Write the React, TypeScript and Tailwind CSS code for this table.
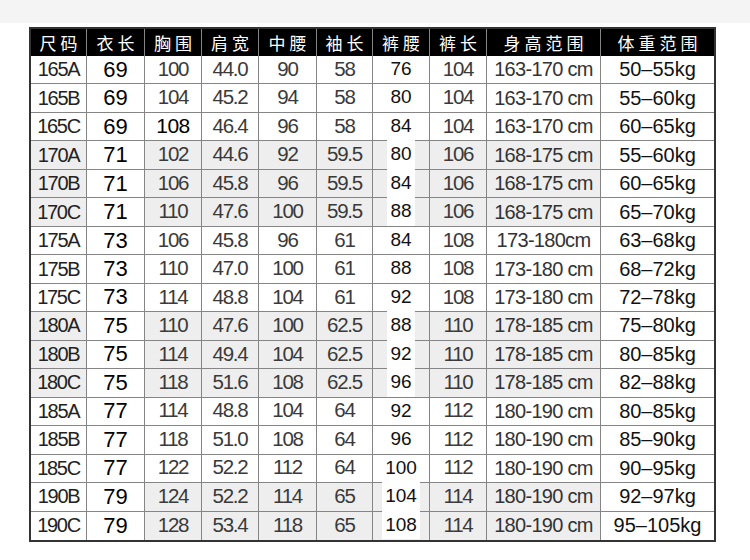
import React from "react";

const headers = ["尺码", "衣长", "胸围", "肩宽", "中腰", "袖长", "裤腰", "裤长", "身高范围", "体重范围"];

const rows: string[][] = [
  ["165A", "69", "100", "44.0", "90", "58", "76", "104", "163-170 cm", "50–55kg"],
  ["165B", "69", "104", "45.2", "94", "58", "80", "104", "163-170 cm", "55–60kg"],
  ["165C", "69", "108", "46.4", "96", "58", "84", "104", "163-170 cm", "60–65kg"],
  ["170A", "71", "102", "44.6", "92", "59.5", "80", "106", "168-175 cm", "55–60kg"],
  ["170B", "71", "106", "45.8", "96", "59.5", "84", "106", "168-175 cm", "60–65kg"],
  ["170C", "71", "110", "47.6", "100", "59.5", "88", "106", "168-175 cm", "65–70kg"],
  ["175A", "73", "106", "45.8", "96", "61", "84", "108", "173-180cm", "63–68kg"],
  ["175B", "73", "110", "47.0", "100", "61", "88", "108", "173-180 cm", "68–72kg"],
  ["175C", "73", "114", "48.8", "104", "61", "92", "108", "173-180 cm", "72–78kg"],
  ["180A", "75", "110", "47.6", "100", "62.5", "88", "110", "178-185 cm", "75–80kg"],
  ["180B", "75", "114", "49.4", "104", "62.5", "92", "110", "178-185 cm", "80–85kg"],
  ["180C", "75", "118", "51.6", "108", "62.5", "96", "110", "178-185 cm", "82–88kg"],
  ["185A", "77", "114", "48.8", "104", "64", "92", "112", "180-190 cm", "80–85kg"],
  ["185B", "77", "118", "51.0", "108", "64", "96", "112", "180-190 cm", "85–90kg"],
  ["185C", "77", "122", "52.2", "112", "64", "100", "112", "180-190 cm", "90–95kg"],
  ["190B", "79", "124", "52.2", "114", "65", "104", "114", "180-190 cm", "92–97kg"],
  ["190C", "79", "128", "53.4", "118", "65", "108", "114", "180-190 cm", "95–105kg"],
];

// rows whose cells carry the faint grey fill from the source image
const shadedFull = ["170A", "170B", "170C", "180A", "180B", "180C"];
const shadedPart = ["190B", "190C"];

function isShaded(size: string, c: number) {
  return (
    (shadedFull.includes(size) && c !== 1 && c !== 9) ||
    (shadedPart.includes(size) && c >= 2 && c <= 8)
  );
}

function cellClass(r: number, c: number, size: string) {
  const lastCol = c === 9;
  const lastRow = r === rows.length - 1;
  return [
    "flex items-center justify-center pb-[1px]",
    lastCol ? "" : "border-r border-[#858585]",
    lastRow ? "" : "border-b border-[#858585]",
    isShaded(size, c) ? "bg-[#eeeeee]" : "bg-white",
  ].join(" ");
}

function textClass(c: number, special: boolean, shaded: boolean) {
  if (special) return "text-[21px] text-black tracking-[-0.5px]";
  switch (c) {
    case 0:
      return "text-[20px] text-[#222] tracking-[-1.3px]";
    case 1:
      return "text-[22px] text-black";
    case 6:
      return `text-[19px] text-[#111] px-[3px] ${shaded ? "bg-white" : ""}`;
    case 8:
      return "text-[20px] text-[#333] tracking-[-0.7px]";
    case 9:
      return "text-[20px] text-[#111]";
    default:
      return "text-[20.5px] text-[#3a3a3a] tracking-[-1.2px]";
  }
}

export default function App() {
  return (
    <div className="w-[750px] h-[560px] bg-white font-['Liberation_Sans',Arial,sans-serif]">
      <div className="h-[23px] bg-[#f4f4f4]" />
      <div className="pt-[4px] pl-[29px]">
        <div className="w-[687px] border-2 border-[#333] grid grid-cols-[56px_58px_57px_57px_58px_56px_57px_57px_114px_113px] grid-rows-[27px_repeat(17,28.47px)]">
          {headers.map((h, c) => (
            <div
              key={h}
              className={`flex items-center justify-center bg-black ${c === 9 ? "" : "border-r border-[#858585]"}`}
            >
              <span className="text-white text-[17px] tracking-[4px] pl-[4px] font-['Noto_Sans_CJK_SC','Noto_Sans',sans-serif]">
                {h}
              </span>
            </div>
          ))}
          {rows.map((row, r) =>
            row.map((v, c) => (
              <div key={`${r}-${c}`} className={cellClass(r, c, row[0])}>
                <span className={textClass(c, r === 2 && c === 2, isShaded(row[0], c))}>{v}</span>
              </div>
            )),
          )}
        </div>
      </div>
    </div>
  );
}
